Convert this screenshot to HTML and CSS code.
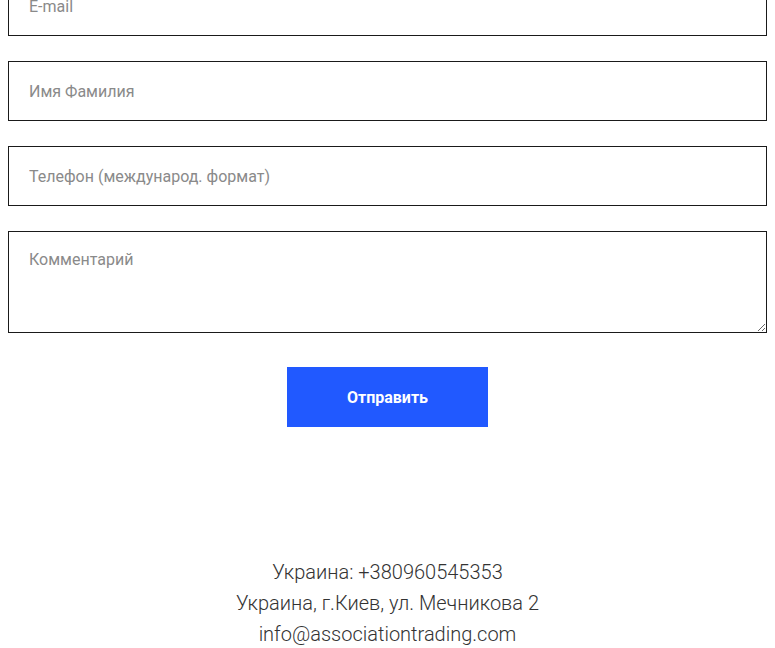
FILE: index.html
```html
<!DOCTYPE html>
<html lang="ru">
<head>
<meta charset="utf-8">
<title>Контакты</title>
<link rel="stylesheet" href="styles.css">
</head>
<body>
<div class="page">
  <form class="form">
    <input class="field" type="email" placeholder="E-mail">
    <input class="field" type="text" placeholder="Имя Фамилия">
    <input class="field" type="tel" placeholder="Телефон (международ. формат)">
    <textarea class="field field-area" placeholder="Комментарий"></textarea>
    <div class="actions">
      <button class="submit" type="button">Отправить</button>
    </div>
  </form>
  <div class="contacts">
    <p>Украина: +380960545353</p>
    <p>Украина, г.Киев, ул. Мечникова 2</p>
    <p>info@associationtrading.com</p>
  </div>
</div>
</body>
</html>
```
FILE: styles.css
```css
html, body {
  margin: 0;
  padding: 0;
  background: #fff;
}
body {
  font-family: Roboto, "Liberation Sans", sans-serif;
  color: #333;
}
.page {
  padding: 0 8px;
}
.form {
  display: flex;
  flex-direction: column;
  gap: 25px;
  margin-top: -24px;
}
.field {
  display: block;
  width: 100%;
  height: 60px;
  box-sizing: border-box;
  border: 1px solid #1a1a1a;
  border-radius: 0;
  padding: 0 20px;
  margin: 0;
  font-family: Roboto, "Liberation Sans", sans-serif;
  font-size: 16px;
  color: #333;
  background: #fff;
  outline: none;
}
.field::placeholder {
  color: #8a8a8a;
}
.field-area {
  height: 102px;
  padding: 18px 20px;
  resize: vertical;
}
.actions {
  display: flex;
  justify-content: center;
  margin-top: 9px;
}
.submit {
  width: 201px;
  height: 60px;
  border: none;
  border-radius: 0;
  background: #2159ff;
  color: #fff;
  font-family: Roboto, "Liberation Sans", sans-serif;
  font-weight: 700;
  font-size: 16px;
  cursor: pointer;
}
.contacts {
  margin-top: 130px;
  text-align: center;
  font-size: 20px;
  font-weight: 300;
  line-height: 31px;
  color: #333;
}
.contacts p {
  margin: 0;
}
```
